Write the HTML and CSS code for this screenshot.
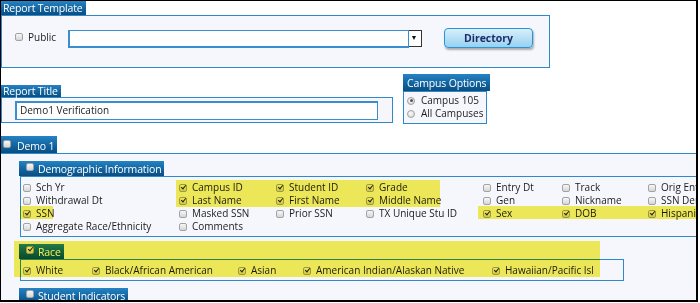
FILE: index.html
```html
<!DOCTYPE html>
<html>
<head>
<meta charset="utf-8">
<link rel="stylesheet" href="styles.css">
</head>
<body>
<div class="frame">
  <section class="template">
    <div class="tab tab-template">Report Template</div>
    <div class="box template-box">
      <label class="public"><span class="cb"></span>Public</label>
      <div class="combo">
        <span class="combo-input"></span>
        <span class="combo-arrow">&#9660;</span>
      </div>
      <button class="btn">Directory</button>
    </div>
  </section>

  <div class="row2">
    <section class="title-sec">
      <div class="tab tab-title">Report Title</div>
      <div class="box title-box">
        <div class="text-input">Demo1 Verification</div>
      </div>
    </section>
    <section class="campus-sec">
      <div class="tab tab-campus">Campus Options</div>
      <div class="box campus-box">
        <div class="radio-row"><span class="rb on"></span>Campus 105</div>
        <div class="radio-row"><span class="rb"></span>All Campuses</div>
      </div>
    </section>
  </div>

  <section class="demo">
    <div class="tab tab-demo"><span class="cb"></span>Demo 1</div>
    <div class="box demo-box">
      <div class="tab tab-sub tab-demog"><span class="cb"></span>Demographic Information</div>
      <div class="box sub-box demog-grid">
        <div class="item"><span class="cb"></span>Sch Yr</div>
        <div class="item"><span class="cb on"></span>Campus ID</div>
        <div class="item"><span class="cb on"></span>Student ID</div>
        <div class="item"><span class="cb on"></span>Grade</div>
        <div class="item"><span class="cb"></span>Entry Dt</div>
        <div class="item"><span class="cb"></span>Track</div>
        <div class="item"><span class="cb"></span>Orig Entry Dt</div>

        <div class="item"><span class="cb"></span>Withdrawal Dt</div>
        <div class="item"><span class="cb on"></span>Last Name</div>
        <div class="item"><span class="cb on"></span>First Name</div>
        <div class="item"><span class="cb on"></span>Middle Name</div>
        <div class="item"><span class="cb"></span>Gen</div>
        <div class="item"><span class="cb"></span>Nickname</div>
        <div class="item"><span class="cb"></span>SSN Denied</div>

        <div class="item"><span class="cb on"></span>SSN</div>
        <div class="item"><span class="cb"></span>Masked SSN</div>
        <div class="item"><span class="cb"></span>Prior SSN</div>
        <div class="item"><span class="cb"></span>TX Unique Stu ID</div>
        <div class="item"><span class="cb on"></span>Sex</div>
        <div class="item"><span class="cb on"></span>DOB</div>
        <div class="item"><span class="cb on"></span>Hispanic/Latino</div>

        <div class="item"><span class="cb"></span>Aggregate Race/Ethnicity</div>
        <div class="item"><span class="cb"></span>Comments</div>
      </div>

      <div class="tab tab-sub tab-race"><span class="cb on"></span>Race</div>
      <div class="box sub-box race-grid">
        <div class="item"><span class="cb on"></span>White</div>
        <div class="item"><span class="cb on"></span>Black/African American</div>
        <div class="item"><span class="cb on"></span>Asian</div>
        <div class="item"><span class="cb on"></span>American Indian/Alaskan Native</div>
        <div class="item"><span class="cb on"></span>Hawaiian/Pacific Isl</div>
      </div>

      <div class="tab tab-sub tab-indicators"><span class="cb"></span>Student Indicators</div>
    </div>
  </section>

  <div class="hl hl-names"></div>
  <div class="hl hl-ssn"></div>
  <div class="hl hl-sex"></div>
  <div class="hl hl-race"></div>
</div>
</body>
</html>
```

FILE: styles.css
```css
html, body {
  margin: 0;
  padding: 0;
  background: #ffffff;
}

body {
  font-family: "Open Sans", "Liberation Sans", sans-serif;
  font-size: 10px;
  color: #1c1c1c;
}

.frame {
  position: relative;
  width: 698px;
  height: 302px;
  box-sizing: border-box;
  border-top: 1px solid #000;
  border-left: 1px solid #000;
  border-right: 2px solid #000;
  border-bottom: 2px solid #000;
  overflow: hidden;
  background: #ffffff;
}

/* tabs */
.tab {
  box-sizing: border-box;
  width: max-content;
  color: #ffffff;
  font-size: 10.5px;
  letter-spacing: -0.15px;
  line-height: 14px;
  white-space: nowrap;
  background: linear-gradient(to bottom, #2583c4 0%, #12649f 55%, #0a4e83 100%);
  display: flex;
  align-items: center;
  padding-right: 3px;
}

.tab .cb {
  margin-right: 6px;
}

.box {
  box-sizing: border-box;
  background: #f5f7fc;
  border: 1px solid #2f89c8;
}

/* Report template */
.tab-template {
  min-width: 83px;
  height: 14px;
  padding-left: 2px;
}

.template-box {
  width: 549px;
  height: 53px;
  display: flex;
  align-items: flex-start;
  padding: 12px 0 0 13px;
}

.public {
  width: 53px;
  display: flex;
  align-items: center;
  margin-top: 3px;
  font-size: 10px;
  line-height: 12px;
}

.public .cb {
  margin-right: 5px;
}

.combo {
  display: flex;
  width: 354px;
  height: 18px;
  margin-top: 2px;
}

.combo-input {
  box-sizing: border-box;
  width: 341px;
  height: 18px;
  background: #fff;
  border: 1px solid #3a8dce;
  border-left-width: 2px;
  border-bottom-width: 2px;
}

.combo-arrow {
  box-sizing: border-box;
  width: 13px;
  height: 17px;
  background: #fff;
  border: 1px solid #333;
  border-left: none;
  font-size: 7px;
  line-height: 13px;
  color: #111;
  text-align: center;
  padding-right: 2px;
}

.btn {
  margin-left: 22px;
  width: 89px;
  height: 20px;
  box-sizing: border-box;
  border: 1px solid #2b95d2;
  border-radius: 4px;
  background: linear-gradient(to bottom, #d9effb 0%, #b6e0f6 50%, #98d1f1 100%);
  box-shadow: 1px 2px 2px rgba(0, 0, 0, 0.3);
  font-family: "Open Sans", "Liberation Sans", sans-serif;
  font-size: 10.5px;
  font-weight: bold;
  color: #1c2d68;
  padding: 0;
}

/* row 2 */
.row2 {
  display: flex;
  align-items: flex-start;
  gap: 10px;
}

.title-sec {
  margin-top: 17px;
}

.tab-title {
  min-width: 60px;
  height: 12px;
  padding-left: 2px;
}

.title-box {
  width: 392px;
  height: 26px;
  padding: 3px 0 0 13px;
}

.text-input {
  box-sizing: border-box;
  width: 363px;
  height: 19px;
  background: #fff;
  border: 1px solid #3a8dce;
  border-left-width: 2px;
  border-top-width: 2px;
  padding-left: 3px;
  font-size: 10px;
  line-height: 15px;
  color: #222;
}

.campus-sec {
  margin-top: 6px;
}

.tab-campus {
  min-width: 87px;
  height: 17px;
  padding-left: 4px;
}

.campus-box {
  width: 84px;
  height: 33px;
  padding: 2px 0 0 3px;
}

.radio-row {
  display: flex;
  align-items: center;
  height: 13px;
  line-height: 13px;
  font-size: 10px;
}

.rb {
  box-sizing: border-box;
  width: 8px;
  height: 8px;
  border-radius: 50%;
  border: 1px solid #a0a0a0;
  background: radial-gradient(circle at 40% 35%, #fafafa 0%, #d4d4d4 100%);
  margin-right: 6px;
  position: relative;
}

.rb.on::after {
  content: "";
  position: absolute;
  left: 1.5px;
  top: 1.5px;
  width: 3px;
  height: 3px;
  border-radius: 50%;
  background: #555;
}

/* checkbox */
.cb {
  box-sizing: border-box;
  display: inline-block;
  flex: none;
  width: 8px;
  height: 8px;
  border: 1px solid #a3a3a3;
  border-radius: 2px;
  background: linear-gradient(to bottom, #f7f7f7 0%, #d6d6d6 100%);
  position: relative;
}

.cb.on::after {
  content: "";
  position: absolute;
  left: 2px;
  top: -0.5px;
  width: 2px;
  height: 4px;
  border: solid #222;
  border-width: 0 1.5px 1.5px 0;
  transform: rotate(40deg);
}

/* demo section */
.demo {
  margin-top: 12px;
}

.tab-demo {
  min-width: 55px;
  height: 17px;
  padding: 3px 3px 0 2px;
}

.tab-demo .cb {
  margin-top: -4px;
}

.demo-box {
  width: 900px;
  height: 200px;
  border-right: none;
  border-bottom: none;
  border-left: none;
  padding: 7px 0 0 18px;
}

.tab-sub {
  height: 15px;
  padding-left: 7px;
}

.tab-sub .cb {
  margin-top: -4px;
  margin-right: 4px;
}

.tab-demog {
  min-width: 142px;
}

.tab-race {
  min-width: 43px;
  margin-top: 7px;
}

.tab-indicators {
  min-width: 107px;
  margin-top: 7px;
  height: 16px;
}

.sub-box {
  margin-left: 1px;
  padding: 4px 0 3px 2px;
}

.demog-grid {
  width: 800px;
  display: grid;
  grid-template-columns: 156px 97px 90px 117px 79px 86px auto;
  grid-auto-rows: 13px;
}

.race-grid {
  width: 604px;
  display: grid;
  grid-template-columns: 69px 146px 65px 189px auto;
  grid-auto-rows: 13px;
}

.item {
  display: flex;
  align-items: center;
  white-space: nowrap;
  font-size: 10px;
  line-height: 13px;
}

.item .cb {
  margin-right: 5px;
}

/* annotation highlights */
.hl {
  position: absolute;
  background: #f6ef5a;
  mix-blend-mode: multiply;
  pointer-events: none;
}

.hl-names {
  left: 175px;
  top: 179px;
  width: 264px;
  height: 27px;
}

.hl-ssn {
  left: 19px;
  top: 205px;
  width: 33px;
  height: 13px;
}

.hl-sex {
  left: 477px;
  top: 205px;
  width: 240px;
  height: 13px;
}

.hl-race {
  left: 13px;
  top: 240px;
  width: 586px;
  height: 36px;
}
```
